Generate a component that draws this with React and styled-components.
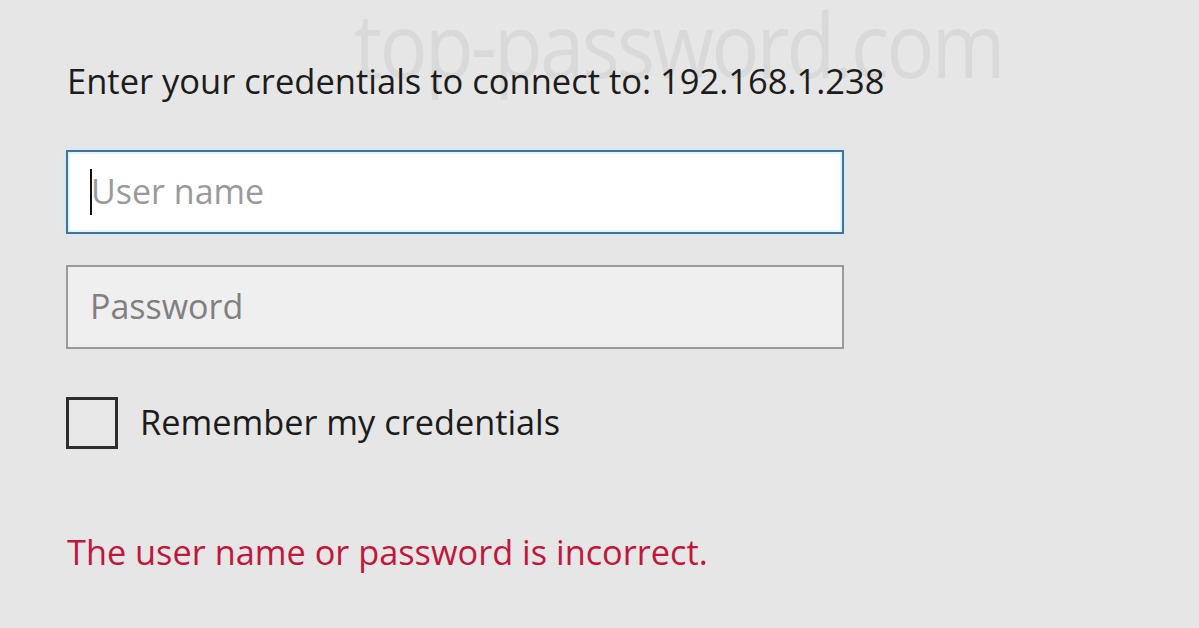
import React from 'react';
import styled, { createGlobalStyle } from 'styled-components';

const Global = createGlobalStyle`
  html, body {
    margin: 0;
    padding: 0;
    background: #e6e6e6;
  }
  body {
    font-family: "Open Sans", "Noto Sans", sans-serif;
  }
`;

const Page = styled.div`
  position: relative;
  width: 1199px;
  height: 628px;
  overflow: hidden;
  background: #e6e6e6;
  padding: 56px 0 0 66px;
  box-sizing: border-box;
  display: flex;
  flex-direction: column;
  align-items: flex-start;
`;

// faint watermark sitting over the dialog
const Watermark = styled.div`
  position: absolute;
  left: 354px;
  top: -6px;
  font-family: "Open Sans", sans-serif;
  font-weight: 400;
  font-size: 90px;
  line-height: 1.1;
  letter-spacing: -3px;
  color: #d9d9d9;
  transform: scaleX(0.885);
  transform-origin: left top;
  pointer-events: none;
  user-select: none;
`;

const Prompt = styled.div`
  position: relative;
  font-size: 34.5px;
  line-height: 50px;
  color: #1c1c1c;
  margin: 0 0 0 1px;
`;

const Field = styled.div`
  position: relative;
  width: 778px;
  height: 84px;
  box-sizing: border-box;
  margin-top: ${(p) => p.$top}px;
  border: 2px solid ${(p) => (p.$focused ? '#43729c' : '#9a9a9a')};
  background: ${(p) => (p.$focused ? '#ffffff' : '#efefef')};
  box-shadow: ${(p) =>
    p.$focused ? 'inset 0 0 0 2px #dff6ff, 0 0 5px 1px #d3e8f6' : 'none'};
  display: flex;
  align-items: center;
  padding-left: 22px;
`;

const Caret = styled.span`
  width: 2px;
  height: 46px;
  background: #111;
  margin-right: -1px;
`;

const Placeholder = styled.span`
  font-size: 34px;
  color: ${(p) => (p.$dim ? '#9a9a9a' : '#808080')};
  line-height: 1;
  margin-top: -2px;
`;

const CheckRow = styled.label`
  display: flex;
  align-items: center;
  gap: 22px;
  margin-top: 48px;
`;

const Box = styled.span`
  width: 52px;
  height: 52px;
  box-sizing: border-box;
  border: 3px solid #2e2e2e;
  background: #e8e8e8;
`;

const CheckLabel = styled.span`
  font-size: 34.3px;
  color: #1c1c1c;
  margin-top: -4px;
`;

const ErrorText = styled.div`
  font-size: 34.3px;
  line-height: 46px;
  color: #c0173c;
  margin: 80px 0 0 1px;
`;

export default function App() {
  return (
    <>
      <Global />
      <Page>
        <Watermark>top-password.com</Watermark>
        <Prompt>Enter your credentials to connect to: 192.168.1.238</Prompt>
        <Field $focused $top={44}>
          <Caret />
          <Placeholder $dim>User name</Placeholder>
        </Field>
        <Field $top={31}>
          <Placeholder>Password</Placeholder>
        </Field>
        <CheckRow>
          <Box />
          <CheckLabel>Remember my credentials</CheckLabel>
        </CheckRow>
        <ErrorText>The user name or password is incorrect.</ErrorText>
      </Page>
    </>
  );
}
